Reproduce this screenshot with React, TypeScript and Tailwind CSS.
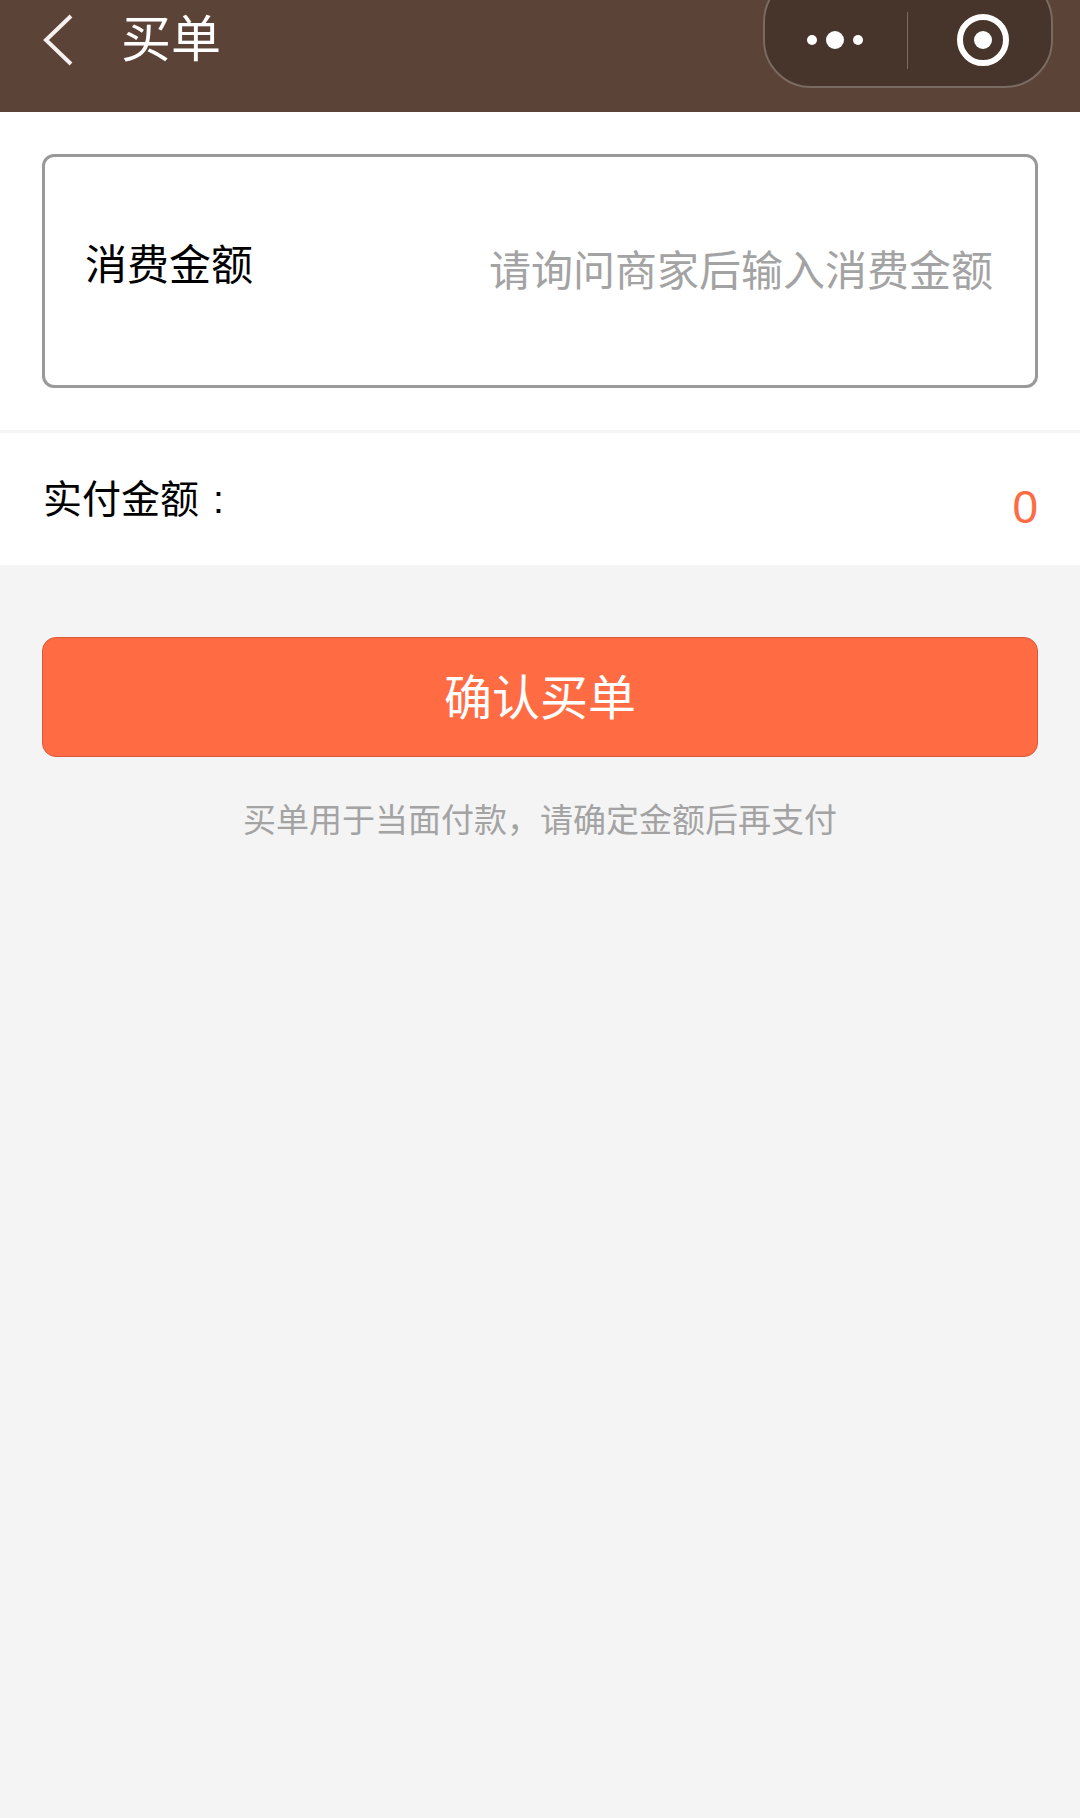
const font = {
  cjk: "font-['Liberation_Sans','Noto_Sans_CJK_SC',sans-serif]",
};

function MenuCapsule() {
  return (
    <div className="absolute right-[27px] top-[-26px] flex h-[114px] w-[290px] items-center rounded-[48px] border-2 border-[#7a6b62] bg-[#47342a] pt-[18px]">
      <div className="flex w-[140px] items-center justify-center gap-[9px]">
        <span className="h-[10px] w-[10px] rounded-full bg-white" />
        <span className="h-[18px] w-[18px] rounded-full bg-white" />
        <span className="h-[10px] w-[10px] rounded-full bg-white" />
      </div>
      <div className="ml-[2px] h-[57px] w-px bg-[#7a6b62]" />
      <div className="flex flex-1 items-center justify-center pl-[6px]">
        <div className="flex h-[52px] w-[52px] items-center justify-center rounded-full border-[6px] border-white">
          <span className="h-[18px] w-[18px] rounded-full bg-white" />
        </div>
      </div>
    </div>
  );
}

export default function App() {
  return (
    <div className={`relative flex min-h-[1818px] w-[1080px] flex-col overflow-hidden bg-[#f4f4f4] ${font.cjk}`}>
      {/* Header */}
      <header className="relative flex h-[112px] items-start bg-[#5c4337]">
        <svg className="ml-[40px] mt-[13px]" width="36" height="54" viewBox="0 0 36 54" fill="none">
          <path d="M31 3 L6 27 L31 51" stroke="#f5f1ee" strokeWidth="4" />
        </svg>
        <h1 className="ml-[45px] mt-[11px] text-[50px] leading-[58px] font-normal text-white">买单</h1>
        <MenuCapsule />
      </header>

      {/* Amount input */}
      <section className="bg-white p-[42px]">
        <div className="flex h-[234px] items-center justify-between rounded-[12px] border-[3px] border-[#999999] pl-[40px] pr-[42px]">
          <span className="mt-[-10px] text-[42px] leading-[50px] text-black">消费金额</span>
          <span className="mt-[2px] text-[42px] leading-[50px] text-[#a3a3a3]">请询问商家后输入消费金额</span>
        </div>
      </section>

      {/* Paid amount */}
      <section className="mt-[3px] flex h-[132px] justify-between bg-white pl-[43px] pr-[42px]">
        <span className="mt-[42px] text-[39px] leading-[50px] text-black">
          实付金额<span className="ml-[14px]">:</span>
        </span>
        <span className="mt-[47px] text-[46px] leading-[54px] text-[#ff6b43]">0</span>
      </section>

      {/* Confirm */}
      <div className="px-[42px] pt-[72px]">
        <button className="flex h-[120px] w-full items-center justify-center rounded-[14px] border border-[#d9573a] bg-[#ff6b43] pt-[4px] text-[48px] text-white">
          确认买单
        </button>
      </div>
      <p className="mt-[42px] text-center text-[33px] leading-[44px] text-[#a3a3a3]">买单用于当面付款，请确定金额后再支付</p>
    </div>
  );
}
